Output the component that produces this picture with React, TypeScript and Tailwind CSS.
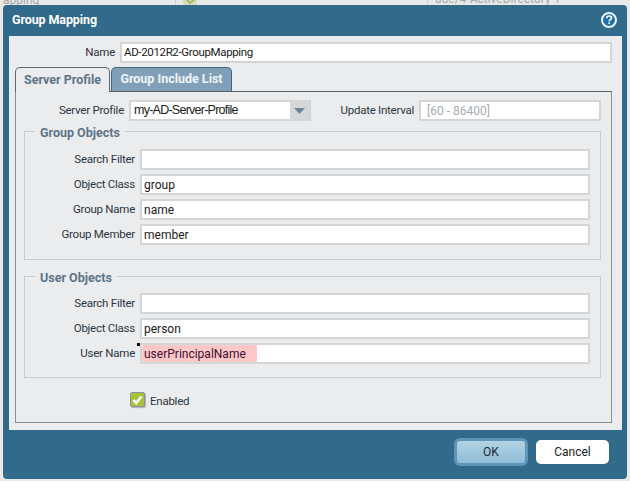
const label = "text-[11.5px] tracking-[-0.25px] leading-none text-[#2b3640] text-right whitespace-nowrap";
const inputBox = "h-[21px] bg-white border-2 border-[#d3d5d7] flex items-center text-[12px] text-[#1a1a1a] whitespace-nowrap";

function Field({ name, value }: { name: string; value?: string }) {
  return (
    <div className="flex items-center h-[21px]">
      <div className={`w-[110px] ${label}`}>{name}</div>
      <div className={`ml-[5px] w-[450px] pl-[2px] ${inputBox}`}>{value}</div>
    </div>
  );
}

function Group({ title, className, children }: { title: string; className: string; children: React.ReactNode }) {
  return (
    <div className={`relative ml-[8px] w-[577px] border border-[#c9cbcd] border-t-0 ${className}`}>
      <div className="flex items-center h-[1px] -mx-[1px] absolute left-0 right-0 top-0">
        <div className="w-[11px] h-[1px] bg-[#c9cbcd]" />
        <div className="px-[5px] mt-[3px] text-[12.5px] font-bold leading-none text-[#5d7488]">{title}</div>
        <div className="flex-1 h-[1px] bg-[#c9cbcd]" />
      </div>
      {children}
    </div>
  );
}

export default function App() {
  return (
    <div className="relative w-[630px] h-[481px] overflow-hidden bg-[#e9e9e7] pl-[3px] pt-[5px]" style={{ fontFamily: 'Roboto, sans-serif' }}>
      <div className="absolute left-[3px] -top-[6px] text-[12px] leading-[12px] text-[#a9a9a9]">apping</div>
      <div className="absolute left-[435px] -top-[7px] text-[12px] leading-[12px] text-[#a9a9a9]">ade/4-ActiveDirectory-1</div>
      <div className="absolute left-[175px] top-0 w-[1px] h-[5px] bg-[#d2d2d2]" />
      <div className="absolute left-[427px] top-0 w-[1px] h-[5px] bg-[#d2d2d2]" />
      <svg className="absolute left-[183px] top-0" width="14" height="5" viewBox="0 0 14 5">
        <rect x="0" y="0" width="14" height="5" fill="#d9dcc0" />
        <path d="M4 0 L7 3 L11 0" fill="none" stroke="#a6bb5a" strokeWidth="2" />
      </svg>

      <div className="relative w-[624px] h-[474px] bg-[#316a8a] rounded-[4px] flex flex-col">
        <div className="h-[31px] flex items-center justify-between pl-[9px] pr-[10px] shrink-0">
          <div className="text-[12.5px] tracking-[-0.1px] font-bold text-white">Group Mapping</div>
          <svg width="16" height="16" viewBox="0 0 16 16" className="mt-[-1px]">
            <circle cx="8" cy="8" r="7" fill="#1d6fa8" stroke="#eaf4fa" strokeWidth="2" />
            <path d="M5.7 6.2 C5.8 4.6 6.9 4 8.1 4 C9.5 4 10.5 4.8 10.5 6 C10.5 7.6 8.3 7.6 8.2 9.3" fill="none" stroke="#fff" strokeWidth="1.7" />
            <rect x="7.3" y="10.3" width="1.8" height="1.8" fill="#fff" />
          </svg>
        </div>

        <div className="ml-[6px] w-[613px] h-[394px] bg-[#ebecee] pt-[6px] pl-[6px] shrink-0">
          <div className="flex items-center h-[21px]">
            <div className={`w-[100px] ${label}`}>Name</div>
            <div className={`ml-[5px] w-[492px] pl-[2px] ${inputBox}`}>
              <span className="text-[11.5px] tracking-[-0.35px]">AD-2012R2-GroupMapping</span>
            </div>
          </div>

          <div className="flex mt-[4px] h-[24px] relative z-10">
            <div className="w-[95px] h-[25px] bg-[#ebecee] border border-b-0 border-[#5a6a75] rounded-t-[5px] flex items-center justify-center text-[12.5px] font-bold text-[#5d7488]">
              Server Profile
            </div>
            <div className="ml-[1px] w-[121px] h-[24px] bg-[#7fa0b8] border border-b-0 border-[#4d6475] rounded-t-[5px] flex items-center justify-center text-[12.5px] font-bold text-[#f0f4f7]">
              Group Include List
            </div>
          </div>

          <div className="w-[597px] h-[332px] border border-[#8a8f93] border-t-[#55626b] pt-[8px]">
            <div className="flex items-center h-[21px]">
              <div className={`w-[108px] ${label}`}>Server Profile</div>
              <div className="ml-[5px] w-[182px] h-[21px] border-2 border-[#d3d5d7] bg-white flex items-center">
                <div className="flex-1 pl-[3px] text-[12.5px] text-[#1a1a1a] tracking-[-0.75px]" style={{ fontFamily: '"Liberation Sans", sans-serif' }}>my-AD-Server-Profile</div>
                <div className="w-[19px] h-full bg-[#d5d7d8] flex items-center justify-center">
                  <svg width="11" height="6" viewBox="0 0 11 6"><path d="M0 0 H11 L5.5 6 Z" fill="#6f8496" /></svg>
                </div>
              </div>
              <div className={`ml-[28px] w-[75px] ${label}`}>Update Interval</div>
              <div className={`ml-[5px] w-[182px] pl-[6px] !text-[#a5acb3] ${inputBox}`}>[60 - 86400]</div>
            </div>

            <Group title="Group Objects" className="mt-[10px] h-[129px] pt-[18px]">
              <div className="flex flex-col gap-[4px]">
                <Field name="Search Filter" />
                <Field name="Object Class" value="group" />
                <Field name="Group Name" value="name" />
                <Field name="Group Member" value="member" />
              </div>
            </Group>

            <Group title="User Objects" className="mt-[16px] h-[102px] pt-[17px]">
              <div className="flex flex-col gap-[4px]">
                <Field name="Search Filter" />
                <Field name="Object Class" value="person" />
                <div className="relative flex items-center h-[21px]">
                  <div className={`w-[110px] ${label}`}>User Name</div>
                  <div className={`ml-[5px] w-[450px] ${inputBox}`}>
                    <div className="w-[115px] h-full bg-[#ffc8c8] rounded-[2px] pl-[2px] flex items-center text-[#3a1030]">userPrincipalName</div>
                  </div>
                  <div className="absolute left-[112px] top-0 w-[3px] h-[3px] bg-[#111]" />
                </div>
              </div>
            </Group>

            <div className="flex items-center mt-[14px] ml-[114px]">
              <div className="w-[15px] h-[15px] bg-[#a5c23c] border border-[#8a9299] rounded-[2px] flex items-center justify-center shadow-[1px_1px_1px_rgba(0,0,0,0.25)]">
                <svg width="11" height="10" viewBox="0 0 11 10"><path d="M1.5 5 L4.2 8 L9.5 1.5" fill="none" stroke="#fff" strokeWidth="2.6" /></svg>
              </div>
              <div className={`ml-[5px] mt-[4px] ${label}`}>Enabled</div>
            </div>
          </div>
        </div>

        <div className="flex-1 flex items-center justify-end pr-[18px] gap-[8px] pb-[5px]">
          <div className="w-[74px] h-[28px] rounded-[6px] border-[3px] border-[#5c97bb] bg-gradient-to-b from-[#b3d3e4] to-[#8fbcd6] flex items-center justify-center text-[12px] text-[#1a2a35]">OK</div>
          <div className="w-[73px] h-[24px] rounded-[5px] bg-white flex items-center justify-center text-[12px] text-[#1a1a1a]">Cancel</div>
        </div>
      </div>
    </div>
  );
}
